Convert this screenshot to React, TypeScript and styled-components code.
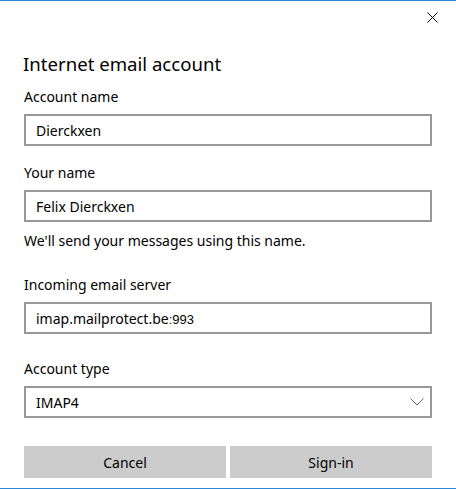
import { FC } from 'react';
import styled, { createGlobalStyle } from 'styled-components';

const GlobalStyle = createGlobalStyle`
  html, body {
    margin: 0;
    padding: 0;
    background: #fff;
  }
  body {
    font-family: 'Noto Sans', 'Open Sans', sans-serif;
    color: #000;
  }
`;

const Window = styled.div`
  box-sizing: border-box;
  width: 456px;
  height: 489px;
  border-top: 1px solid #2b88d8;
  border-bottom: 1px solid #2b88d8;
  padding: 0 24px;
  display: flex;
  flex-direction: column;
  background: #fff;
`;

const TitleBar = styled.div`
  height: 32px;
  margin-right: -24px;
  display: flex;
  justify-content: flex-end;
`;

const CloseButton = styled.button`
  width: 48px;
  height: 32px;
  border: none;
  background: transparent;
  padding: 0;
  display: flex;
  align-items: center;
  justify-content: center;
`;

const Title = styled.h1`
  margin: 17px 0 0 -1px;
  font-size: 18.6px;
  line-height: 28px;
  font-weight: 400;
`;

const Label = styled.label<{ $top: number }>`
  display: block;
  margin-top: ${p => p.$top}px;
  margin-bottom: 7px;
  font-size: 14px;
  line-height: 20px;
`;

const Field = styled.div<{ $select?: boolean }>`
  box-sizing: border-box;
  height: 32px;
  border: 2px solid #999;
  padding: 0 ${p => (p.$select ? 6 : 10)}px 0 10px;
  display: flex;
  align-items: center;
  justify-content: space-between;
  font-size: 14px;
`;

const Port = styled.span`
  font-family: 'Liberation Sans', Arial, sans-serif;
  font-size: 13px;
`;

const Hint = styled.p`
  margin: 9px 0 0;
  font-size: 14px;
  line-height: 20px;
`;

const Buttons = styled.div`
  margin-top: 28px;
  display: grid;
  grid-template-columns: 1fr 1fr;
  gap: 4px;
`;

const Button = styled.button`
  height: 32px;
  border: none;
  background: #cccccc;
  font-family: inherit;
  font-size: 14px;
  color: #000;
`;

const Chevron: FC = () => (
  <svg width="14" height="8" viewBox="0 0 14 8">
    <path d="M0.5 0.5 L7 7 L13.5 0.5" fill="none" stroke="#666" strokeWidth="1" />
  </svg>
);

const CloseIcon: FC = () => (
  <svg width="11" height="11" viewBox="0 0 11 11">
    <path d="M0.5 0.5 L10.5 10.5 M10.5 0.5 L0.5 10.5" stroke="#000" strokeWidth="1" />
  </svg>
);

export default function App() {
  return (
    <>
      <GlobalStyle />
      <Window>
        <TitleBar>
          <CloseButton aria-label="Close">
            <CloseIcon />
          </CloseButton>
        </TitleBar>
        <Title>Internet email account</Title>
        <Label $top={9}>Account name</Label>
        <Field>Dierckxen</Field>
        <Label $top={17}>Your name</Label>
        <Field>Felix Dierckxen</Field>
        <Hint>We'll send your messages using this name.</Hint>
        <Label $top={24}>Incoming email server</Label>
        <Field>
          <span>
            imap.mailprotect.be<Port>:993</Port>
          </span>
        </Field>
        <Label $top={25}>Account type</Label>
        <Field $select>
          <span>IMAP4</span>
          <Chevron />
        </Field>
        <Buttons>
          <Button>Cancel</Button>
          <Button>Sign-in</Button>
        </Buttons>
      </Window>
    </>
  );
}
